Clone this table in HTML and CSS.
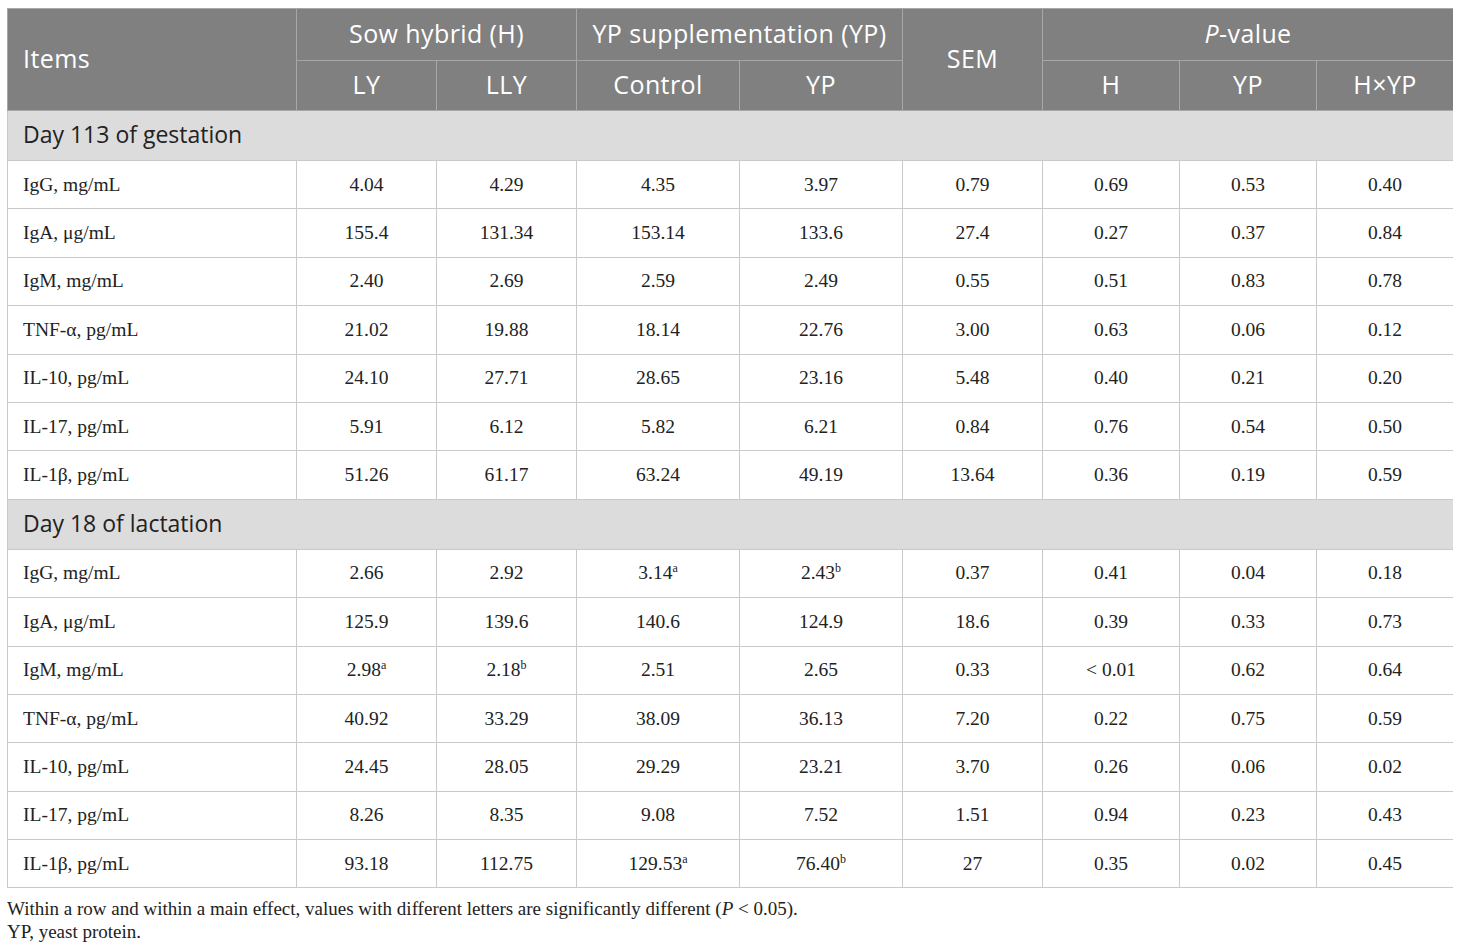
FILE: index.html
```html
<!DOCTYPE html>
<html lang="en">
<head>
    <meta charset="UTF-8">
    <title>Immunoglobulins and cytokines in sow serum</title>
    <link rel="stylesheet" href="styles.css">
</head>
<body>
    <table class="data">
        <colgroup>
            <col class="c-items">
            <col class="c-140"><col class="c-140">
            <col class="c-163"><col class="c-163">
            <col class="c-140">
            <col class="c-137"><col class="c-137"><col class="c-137">
        </colgroup>
        <thead>
            <tr class="h1">
                <th rowspan="2" class="left">Items</th>
                <th colspan="2">Sow hybrid (H)</th>
                <th colspan="2">YP supplementation (YP)</th>
                <th rowspan="2">SEM</th>
                <th colspan="3"><i>P</i>-value</th>
            </tr>
            <tr class="h2">
                <th>LY</th><th>LLY</th><th>Control</th><th>YP</th>
                <th>H</th><th>YP</th><th>H×YP</th>
            </tr>
        </thead>
        <tbody>
            <tr class="section"><td colspan="9">Day 113 of gestation</td></tr>
            <tr><td>IgG, mg/mL</td><td>4.04</td><td>4.29</td><td>4.35</td><td>3.97</td><td>0.79</td><td>0.69</td><td>0.53</td><td>0.40</td></tr>
            <tr><td>IgA, μg/mL</td><td>155.4</td><td>131.34</td><td>153.14</td><td>133.6</td><td>27.4</td><td>0.27</td><td>0.37</td><td>0.84</td></tr>
            <tr><td>IgM, mg/mL</td><td>2.40</td><td>2.69</td><td>2.59</td><td>2.49</td><td>0.55</td><td>0.51</td><td>0.83</td><td>0.78</td></tr>
            <tr><td>TNF-α, pg/mL</td><td>21.02</td><td>19.88</td><td>18.14</td><td>22.76</td><td>3.00</td><td>0.63</td><td>0.06</td><td>0.12</td></tr>
            <tr><td>IL-10, pg/mL</td><td>24.10</td><td>27.71</td><td>28.65</td><td>23.16</td><td>5.48</td><td>0.40</td><td>0.21</td><td>0.20</td></tr>
            <tr><td>IL-17, pg/mL</td><td>5.91</td><td>6.12</td><td>5.82</td><td>6.21</td><td>0.84</td><td>0.76</td><td>0.54</td><td>0.50</td></tr>
            <tr><td>IL-1β, pg/mL</td><td>51.26</td><td>61.17</td><td>63.24</td><td>49.19</td><td>13.64</td><td>0.36</td><td>0.19</td><td>0.59</td></tr>
            <tr class="section"><td colspan="9">Day 18 of lactation</td></tr>
            <tr><td>IgG, mg/mL</td><td>2.66</td><td>2.92</td><td>3.14<sup>a</sup></td><td>2.43<sup>b</sup></td><td>0.37</td><td>0.41</td><td>0.04</td><td>0.18</td></tr>
            <tr><td>IgA, μg/mL</td><td>125.9</td><td>139.6</td><td>140.6</td><td>124.9</td><td>18.6</td><td>0.39</td><td>0.33</td><td>0.73</td></tr>
            <tr><td>IgM, mg/mL</td><td>2.98<sup>a</sup></td><td>2.18<sup>b</sup></td><td>2.51</td><td>2.65</td><td>0.33</td><td>&lt; 0.01</td><td>0.62</td><td>0.64</td></tr>
            <tr><td>TNF-α, pg/mL</td><td>40.92</td><td>33.29</td><td>38.09</td><td>36.13</td><td>7.20</td><td>0.22</td><td>0.75</td><td>0.59</td></tr>
            <tr><td>IL-10, pg/mL</td><td>24.45</td><td>28.05</td><td>29.29</td><td>23.21</td><td>3.70</td><td>0.26</td><td>0.06</td><td>0.02</td></tr>
            <tr><td>IL-17, pg/mL</td><td>8.26</td><td>8.35</td><td>9.08</td><td>7.52</td><td>1.51</td><td>0.94</td><td>0.23</td><td>0.43</td></tr>
            <tr><td>IL-1β, pg/mL</td><td>93.18</td><td>112.75</td><td>129.53<sup>a</sup></td><td>76.40<sup>b</sup></td><td>27</td><td>0.35</td><td>0.02</td><td>0.45</td></tr>
        </tbody>
    </table>

    <div class="notes">
        <p>Within a row and within a main effect, values with different letters are significantly different (<i>P</i> &lt; 0.05).</p>
        <p>YP, yeast protein.</p>
    </div>
</body>
</html>
```

FILE: styles.css
```css
* {
    box-sizing: border-box;
}
body {
    margin: 8px 7px;
    background-color: #ffffff;
    color: #222222;
    font-family: "Liberation Serif", "Times New Roman", serif;
}
.data {
    border-collapse: collapse;
    table-layout: fixed;
    width: 1446px;
}
.c-items { width: 289px; }
.c-140 { width: 140px; }
.c-163 { width: 163px; }
.c-137 { width: 137px; }

.data th {
    background-color: #7f807f;
    color: #ffffff;
    font-family: "Open Sans", "Noto Sans", sans-serif;
    font-weight: normal;
    font-size: 25px;
    letter-spacing: 0.4px;
    text-align: center;
    border: 1px solid #a6a7a6;
    padding: 0 4px 4px;
}
.data th.left {
    text-align: left;
    padding-left: 15px;
}
.data .h1 { height: 52px; }
.data .h2 { height: 50px; }

.data td {
    border: 1px solid #c9c9c9;
    font-size: 19.5px;
    text-align: center;
    padding: 0 8px;
    height: 48.4px;
}
.data td:first-child {
    text-align: left;
    padding-left: 15px;
}
.data sup {
    font-size: 12px;
    line-height: 0;
    vertical-align: 7px;
}
.data .section td {
    background-color: #dcdcdc;
    font-family: "Open Sans", "Noto Sans", sans-serif;
    font-size: 23px;
    color: #222222;
    height: 50px;
    padding-bottom: 3px;
}

.notes {
    margin-top: 9px;
    font-size: 19px;
    line-height: 23px;
    color: #222222;
}
.notes p {
    margin: 0;
}
```
